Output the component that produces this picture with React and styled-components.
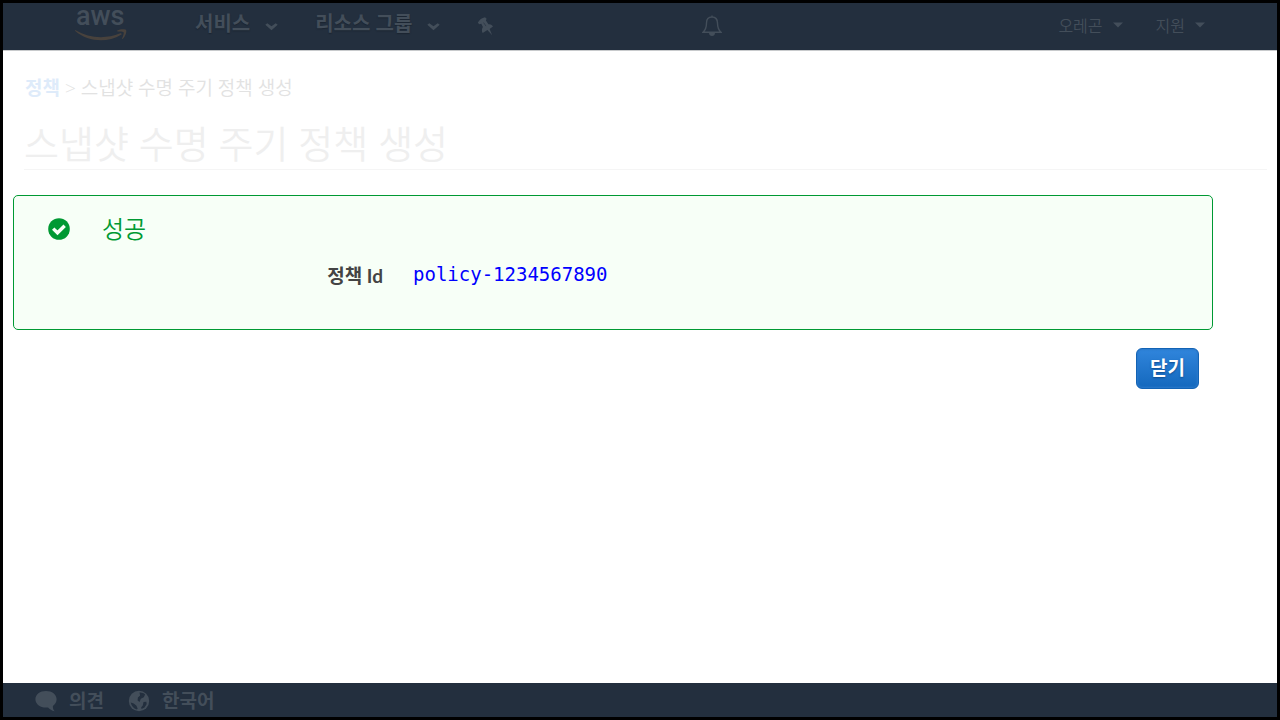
import styled, { createGlobalStyle } from 'styled-components';

export default function App() {
  return (
    <>
      <GlobalStyles />
      <Frame>
        <TopBar>
          <Logo href="#home" aria-label="aws">
            <LogoText>aws</LogoText>
            <Smile />
          </Logo>
          <MainNav>
            <NavButton type="button">서비스 <Chevron /></NavButton>
            <NavButton type="button">리소스 그룹 <Chevron /></NavButton>
            <IconButton type="button" aria-label="Pin"><Pin /></IconButton>
          </MainNav>
          <AlertsButton type="button" aria-label="Alerts"><Bell /></AlertsButton>
          <SideNav>
            <SmallNavButton type="button">오레곤 <Caret /></SmallNavButton>
            <SmallNavButton type="button">지원 <Caret /></SmallNavButton>
          </SideNav>
        </TopBar>

        <Main>
          <Intro>
            <Breadcrumb>
              <a href="#policies">정책</a> &gt; 스냅샷 수명 주기 정책 생성
            </Breadcrumb>
            <Title>스냅샷 수명 주기 정책 생성</Title>
          </Intro>

          <Result>
            <Alert>
              <AlertHead>
                <Check />
                <AlertTitle>성공</AlertTitle>
              </AlertHead>
              <Details>
                <dt>정책 Id</dt>
                <dd><a href="#policy">policy-1234567890</a></dd>
              </Details>
            </Alert>
            <Actions>
              <CloseButton type="button">닫기</CloseButton>
            </Actions>
          </Result>
        </Main>

        <Footer>
          <FooterButton type="button"><Comment />의견</FooterButton>
          <FooterButton type="button"><Globe />한국어</FooterButton>
        </Footer>
      </Frame>
    </>
  );
}

const Smile = () => (
  <svg width="52" height="13" viewBox="0 0 52 13" fill="#48423d" aria-hidden="true">
    <path d="M.6 1.2C14 9 30 10.5 45.200 4.300c1.200-.5 2 .7.900 1.500C32 14.300 13 13 .2 2.100c-.5-.5-.2-1.200.4-.9z" />
    <path d="M42.300 1.500C45 .1 50-.1 51 .9c1 1.200-.4 6.400-3.100 8.800-.6.500-1 .2-.8-.4.900-2 2-4.900 1.500-6-.5-1-3.800-.9-5.800-.8-.7.100-.9-.6-.5-1z" />
  </svg>
);

const Chevron = () => (
  <svg width="13" height="8" viewBox="0 0 13 8" aria-hidden="true">
    <path d="M.3 1.800 2.300.2l4.200 3 4.200-3 2 1.600-6.200 5.400z" fill="currentColor" />
  </svg>
);

const Caret = () => (
  <svg width="10" height="6" viewBox="0 0 10 6" aria-hidden="true">
    <path d="M0 .5h10l-5 5z" fill="currentColor" />
  </svg>
);

const Pin = () => (
  <svg width="18" height="20" viewBox="0 0 18 20" fill="currentColor" aria-hidden="true">
    <path d="M.8 6.800C2.300 3.800 5 1.800 8 1.300l1.600 1.500-.7 1.800 2.500 3.600c2.300-.3 4 .7 4.600 2.400l-3.400 2.300 2.600 6.300-4.800-5.300-4.700 3.200c-1.200-2-1-4.300.2-6.200L4.300 7.700 2.300 8.300z" />
    <path d="m6.600 6.600 2.400 3.500" stroke="#232f3e" strokeWidth=".6" fill="none" />
  </svg>
);

const Bell = () => (
  <svg width="20" height="22" viewBox="0 0 20 22" fill="none" stroke="currentColor" strokeWidth="1.400" aria-hidden="true">
    <path d="M10 .5V2M10 2C6.500 2 4.500 4.500 4.500 8c0 4.500-1 7-3.500 9.300h18C16.500 15 15.500 12.500 15.500 8c0-3.500-2-6-5.500-6z" />
    <path d="M7 18h6c0 1.800-1.300 3-3 3s-3-1.200-3-3z" fill="currentColor" stroke="none" />
  </svg>
);

const Check = () => (
  <svg width="22" height="22" viewBox="0 0 22 22" aria-hidden="true">
    <circle cx="11" cy="11" r="10.800" fill="#093" />
    <path d="m5.200 10.600 4.300 4.200 7.200-7" fill="none" stroke="#f7fff7" strokeWidth="3.400" />
  </svg>
);

const Comment = () => (
  <svg width="22" height="22" viewBox="0 0 22 22" fill="currentColor" aria-hidden="true">
    <path d="M11 1C5 1 .4 4.500.4 9.300S5 17.600 11 17.600l2-.1c1.800 1.800 3.700 3.200 6.700 3.800-1.400-1.500-2-3-1.800-5.300 2.300-1.600 3.700-3.900 3.700-6.700C21.600 4.500 17 1 11 1z" />
  </svg>
);

const Globe = () => (
  <svg width="22" height="22" viewBox="0 0 22 22" aria-hidden="true">
    <circle cx="11" cy="11" r="10.200" fill="currentColor" />
    <path d="M11.500 2.500c2.200-.2 4.200.5 5.600 1.900l-1.300 2.800-3 1.600-1.200 3.200-2-1.600.3-3 2.200-1.900zM2.700 12.500l3 1 2.800 2.300 1.200 3-1 .6c-3.200-1-5.400-3.500-6-6.900zM15.500 12l2.800-.3.400 2.300-2.200 3.500-3 1.500-.3-1.800 1.600-1.700z" fill="#232f3e" />
  </svg>
);

const GlobalStyles = createGlobalStyle`
  * {
    box-sizing: border-box;
  }

  body {
    margin: 0;
    font-family: "Open Sans", "Noto Sans CJK KR", sans-serif;
    background: #fff;
  }

  button {
    font-family: inherit;
    cursor: pointer;
  }

  svg {
    display: block;
    flex: none;
  }
`;

const Frame = styled.div`
  display: flex;
  flex-direction: column;
  min-height: 100vh;
  border: 3px solid #000;
`;

const TopBar = styled.header`
  display: grid;
  grid-template-columns: 120px 1fr auto 1fr;
  height: 48px;
  padding: 0 72px;
  color: #434e5a;
  background: #232f3e;
  border-bottom: 1px solid #c8cacc;
`;

const Logo = styled.a`
  display: flex;
  flex-direction: column;
  align-items: flex-start;
  text-decoration: none;
  color: #434e5a;
`;

const LogoText = styled.span`
  padding-left: 1px;
  font: 500 27px/26px Roboto, sans-serif;
`;

const MainNav = styled.nav`
  display: flex;
  gap: 37px;
`;

const SideNav = styled.nav`
  display: flex;
  justify-content: flex-end;
  gap: 33px;
`;

const BareButton = styled.button`
  display: flex;
  align-items: center;
  padding: 0;
  border: 0;
  color: inherit;
  background: none;
`;

const NavButton = styled(BareButton)`
  gap: 15px;
  padding-bottom: 8px;
  font-size: 20px;
  font-weight: 700;
  text-shadow: 0 1px 1px #1b2531;

  & svg {
    margin-top: 8px;
  }
`;

const SmallNavButton = styled(BareButton)`
  gap: 10px;
  padding-bottom: 3px;
  font-size: 16px;
  font-weight: 350;
`;

const IconButton = styled(BareButton)`
  padding-bottom: 2px;
`;

const AlertsButton = styled(IconButton)`
  padding-left: 24px;
`;

const Main = styled.main`
  flex: 1;
  padding: 24px 10px;
`;

const Intro = styled.div`
  padding-left: 11px;
`;

const Breadcrumb = styled.nav`
  padding-left: 1px;
  font-size: 19px;
  font-weight: 350;
  line-height: 26px;
  color: #e2e2e2;

  & a {
    font-weight: 700;
    text-decoration: none;
    color: #deebfa;
  }
`;

const Title = styled.h1`
  margin: 18px 0 25px;
  padding-bottom: 2px;
  border-bottom: 1px solid #f5f5f5;
  font-size: 38px;
  font-weight: 350;
  line-height: 48px;
  color: #efefef;
`;

const Result = styled.div`
  margin-right: 54px;
`;

const Alert = styled.section`
  padding: 16px 34px 37px;
  border: 1px solid #093;
  border-radius: 5px;
  background: #f7fff7;
`;

const AlertHead = styled.div`
  display: flex;
  align-items: center;
  gap: 32px;
`;

const AlertTitle = styled.h2`
  margin: 0;
  font-size: 24px;
  font-weight: 350;
  line-height: 33px;
  color: #093;
`;

const Details = styled.dl`
  display: grid;
  grid-template-columns: 335px 1fr;
  column-gap: 30px;
  margin: 14px 0 0;
  font-size: 19px;
  line-height: 30px;

  & dt {
    font-family: Lato, "Noto Sans CJK KR", sans-serif;
    font-weight: 700;
    line-height: 33px;
    text-align: right;
    color: #444;
  }

  & dd {
    margin: 0;
    font-family: "DejaVu Sans Mono", monospace;
  }

  & a {
    text-decoration: none;
    color: #00f;
  }
`;

const Actions = styled.div`
  display: flex;
  justify-content: flex-end;
  padding: 18px 14px;
`;

const CloseButton = styled.button`
  padding: 0 13px;
  border: 1px solid #1363b5;
  border-radius: 6px;
  font-size: 19px;
  font-weight: 700;
  line-height: 39px;
  color: #fff;
  text-shadow: 0 1px 2px #0c4a8c;
  background: linear-gradient(#3085dc, #1468bd);
  box-shadow: inset 0 0 2px 1px #2b79cb;
`;

const Footer = styled.footer`
  display: flex;
  gap: 24px;
  height: 34px;
  padding: 0 32px;
  color: #434e5a;
  background: #232f3e;
`;

const FooterButton = styled(BareButton)`
  gap: 12px;
  font-size: 19px;
  font-weight: 700;

  & svg {
    margin-top: 2px;
  }
`;
